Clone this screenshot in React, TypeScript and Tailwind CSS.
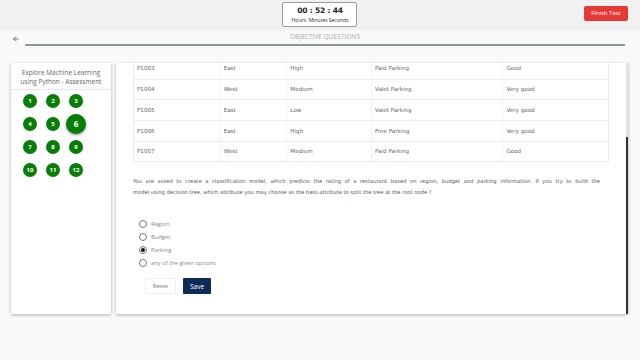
import { ArrowLeft } from "lucide-react";

const rows = [
  ["P1003", "East", "High", "Paid Parking", "Good"],
  ["P1004", "West", "Medium", "Valet Parking", "Very good"],
  ["P1005", "East", "Low", "Valet Parking", "Very good"],
  ["P1006", "East", "High", "Free Parking", "Very good"],
  ["P1007", "West", "Medium", "Paid Parking", "Good"],
];

const widths = ["w-[86px]", "w-[67px]", "w-[85px]", "w-[132px]", "w-[106px]"];

const options = ["Region", "Budget", "Parking", "any of the given options"];

export default function App() {
  return (
    <div className="w-[640px] h-[360px] overflow-hidden bg-[#f9f9f9] font-['Open_Sans',sans-serif]">
      {/* top bar */}
      <div className="grid grid-cols-3 h-[30px] bg-[#f1f1f1] items-start">
        <div />
        <div className="flex justify-center pt-[2px]">
          <div className="w-[75px] h-[25px] bg-white border border-[#9a9a9a] rounded-[2px] flex flex-col items-center justify-center">
            <div className="text-[7.5px] leading-[10px] font-bold text-[#222] font-['DejaVu_Sans',sans-serif] tracking-tight">
              00 : 52 : 44
            </div>
            <div className="text-[5.3px] leading-[8px] text-[#333] tracking-tight">
              Hours&nbsp; Minutes Seconds
            </div>
          </div>
        </div>
        <div className="flex justify-end pr-[12px] pt-[6px]">
          <button className="h-[15px] w-[44px] bg-[#e53935] text-white text-[6px] rounded-[2px]">
            Finish Test
          </button>
        </div>
      </div>

      {/* header */}
      <div className="flex items-start h-[20px] pl-[12px]">
        <ArrowLeft className="w-[8px] h-[8px] mt-[5px] text-[#444]" strokeWidth={2} />
        <div className="flex-1 flex flex-col ml-[5px] mr-[15px]">
          <div className="text-center text-[6.3px] leading-[14px] text-[#a8a8a8] tracking-wide">
            OBJECTIVE QUESTIONS
          </div>
          <div className="h-[2px] bg-[#8d9699]" />
        </div>
      </div>

      {/* content */}
      <div className="flex gap-[5px] pl-[11px] pt-[13px]">
        <div className="w-[100px] h-[251px] bg-white shadow-[0_1px_3px_rgba(0,0,0,0.3)] flex flex-col">
          <div className="text-center text-[6.5px] leading-[9px] text-[#666] pt-[5px] pb-[3px] border-b border-[#e6e6e6]">
            Explore Machine Learning
            <br />
            using Python - Assessment
          </div>
          <div className="grid grid-cols-[23px_23px_23px] gap-y-[9px] pl-[12px] pt-[4px] items-center">
            {Array.from({ length: 12 }, (_, i) => i + 1).map((n) =>
              n === 6 ? (
                <div key={n} className="w-[14px] h-[14px] flex items-center justify-center">
                  <div className="w-[20px] h-[20px] shrink-0 rounded-full bg-[#087d08] shadow-[0_1px_3px_rgba(0,0,0,0.5)] text-white text-[8px] font-bold flex items-center justify-center">
                    6
                  </div>
                </div>
              ) : (
                <div
                  key={n}
                  className="w-[14px] h-[14px] rounded-full bg-[#087d08] text-white text-[6px] font-bold flex items-center justify-center"
                >
                  {n}
                </div>
              )
            )}
          </div>
        </div>

        <div className="relative w-[512px] h-[251px] bg-white shadow-[0_1px_3px_rgba(0,0,0,0.3)] overflow-hidden">
          <div className="-mt-[6px] pl-[17px]">
            <div className="w-[476px] border border-[#ececec] font-['DejaVu_Sans',sans-serif] text-[5.6px] text-[#666]">
              {rows.map((r, i) => (
                <div key={i} className={`flex h-[20.7px] items-center ${i > 0 ? "border-t border-[#ececec]" : ""}`}>
                  {r.map((c, j) => (
                    <div
                      key={j}
                      className={`${widths[j]} h-full flex items-center pl-[3px] ${j > 0 ? "border-l border-[#f2f2f2]" : ""}`}
                    >
                      {c}
                    </div>
                  ))}
                </div>
              ))}
            </div>

            <div className="mt-[14px] w-[467px] font-['DejaVu_Sans',sans-serif] text-[5.2px] leading-[11px] text-[#555]">
              <p className="text-justify [text-align-last:justify]">
                You are asked to create a classification model, which predicts the rating of a restaurant based on region, budget and parking information. If you try to build the
              </p>
              <p>
                model using decision tree, which attribute you may choose as the best-attribute to split the tree at the root node ?
              </p>
            </div>

            <div className="mt-[22px] pl-[6px] flex flex-col gap-[5px]">
              {options.map((o, i) => (
                <div key={o} className="flex items-center gap-[4px] h-[8px]">
                  <div className="w-[8px] h-[8px] rounded-full border border-[#777] flex items-center justify-center">
                    {i === 2 && <div className="w-[4px] h-[4px] rounded-full bg-[#111]" />}
                  </div>
                  <span className="text-[5.8px] text-[#888]">{o}</span>
                </div>
              ))}
            </div>

            <div className="mt-[11px] pl-[12px] flex gap-[7px]">
              <button className="w-[31px] h-[16px] bg-white border border-[#f0f0f0] text-[6px] text-[#777]">
                Reset
              </button>
              <button className="w-[28px] h-[16px] bg-[#0e2a56] rounded-[1px] text-[6.5px] text-white">
                Save
              </button>
            </div>
          </div>
          <div className="absolute right-0 top-0 w-[2px] h-full bg-[#e4e4e4]" />
          <div className="absolute right-0 top-[74px] bottom-0 w-[2px] bg-[#333]" />
        </div>
      </div>
    </div>
  );
}
